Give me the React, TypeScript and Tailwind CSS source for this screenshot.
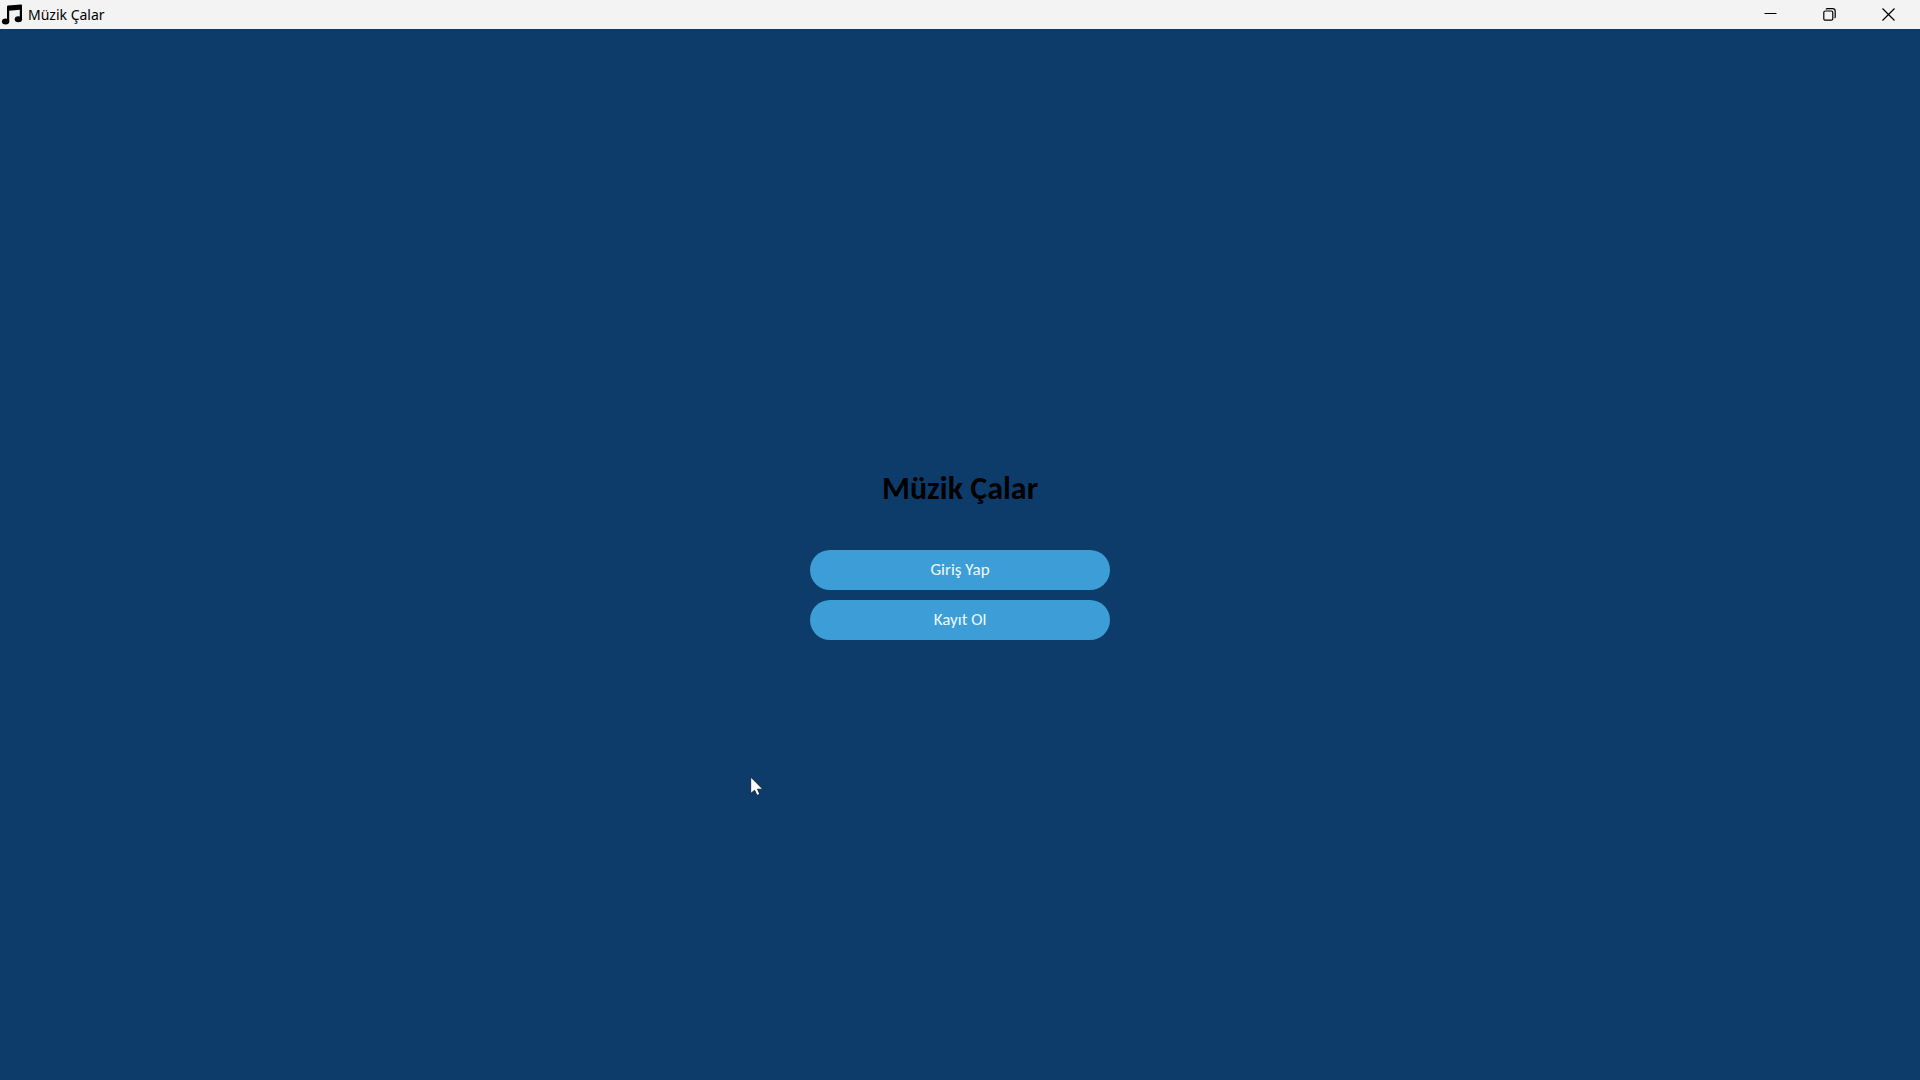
function NoteIcon() {
  return (
    <svg className="h-6 w-6" viewBox="0 0 24 24" aria-hidden="true">
      <path d="M7 3.6 Q7 2.6 8 2.5 L21 1.6 Q22 1.5 22 2.5 V16 H19.8 V6.8 L9.2 7.8 V18.5 H7 Z" fill="#000" />
      <ellipse cx="5.6" cy="18.5" rx="3.7" ry="3" fill="#000" />
      <ellipse cx="18.4" cy="16.2" rx="3.7" ry="3" fill="#000" />
    </svg>
  );
}

const controlClass = "flex h-full w-[59px] items-center justify-center";

function TitleBar() {
  return (
    <header className="flex h-[29px] shrink-0 items-center justify-between bg-[#f3f3f3] text-black">
      <div className="flex items-center">
        <NoteIcon />
        <span className="ml-1 font-['Noto_Sans',sans-serif] text-sm leading-5">Müzik Çalar</span>
      </div>
      <div className="mr-0.5 flex h-full">
        <button type="button" aria-label="Simge durumuna küçült" className={controlClass}>
          <svg className="h-[13px] w-[13px]" viewBox="0 0 13 13" fill="none" stroke="#000">
            <path d="M0.5 5.5H12.5" />
          </svg>
        </button>
        <button type="button" aria-label="Önceki boyut" className={controlClass}>
          <svg className="h-[13px] w-[13px]" viewBox="0 0 13 13" fill="none" stroke="#000">
            <rect x="0.8" y="3" width="9" height="9.2" rx="1.5" strokeWidth="1.2" />
            <path d="M3 1.3Q3.4 0.7 4.4 0.7H9.6Q12.2 0.7 12.2 3.3V8.4Q12.2 9.5 11.6 10" strokeWidth="1.2" />
          </svg>
        </button>
        <button type="button" aria-label="Kapat" className={controlClass}>
          <svg className="h-[13px] w-[13px]" viewBox="0 0 13 13" fill="none" stroke="#000" strokeWidth="1.2">
            <path d="M0.5 0.5L12.5 12.5M12.5 0.5L0.5 12.5" />
          </svg>
        </button>
      </div>
    </header>
  );
}

function PillButton({ label }: { label: string }) {
  return (
    <button
      type="button"
      className="h-10 w-full rounded-full bg-[#3c9dd7] text-[17px] leading-5 text-[#eefaff]"
    >
      {label}
    </button>
  );
}

function Cursor() {
  return (
    <svg
      className="pointer-events-none absolute left-[750px] top-[776px] h-5 w-[14px]"
      viewBox="0 0 14 20"
      aria-hidden="true"
    >
      <path
        d="M0.7 1V17.6L4.6 14.2L7 19.4L9.8 18.2L7.5 13.2H12.8Z"
        fill="#fff"
        stroke="#06172c"
        strokeWidth="0.8"
      />
    </svg>
  );
}

export default function App() {
  return (
    <div className="relative flex min-h-screen flex-col bg-[#0d3c6b]">
      <TitleBar />
      <main className="flex flex-1 flex-col items-center justify-center font-[Carlito,Lato,sans-serif]">
        <h1 className="mb-[42px] text-[32px] font-bold leading-[39px] text-black">Müzik Çalar</h1>
        <div className="flex w-[300px] flex-col gap-[10px]">
          <PillButton label="Giriş Yap" />
          <PillButton label="Kayıt Ol" />
        </div>
      </main>
      <Cursor />
    </div>
  );
}
